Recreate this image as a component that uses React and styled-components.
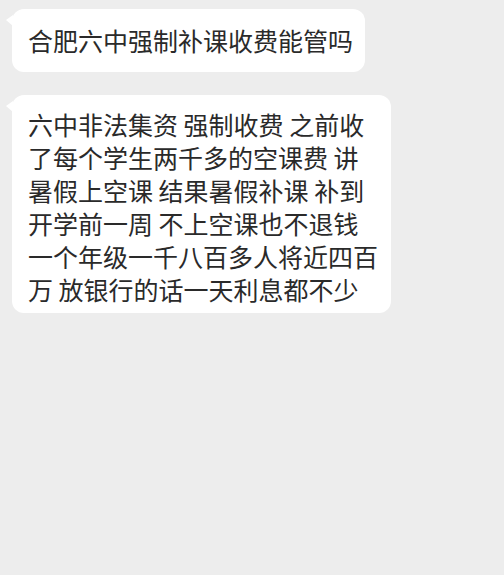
import React from 'react'
import styled, { createGlobalStyle } from 'styled-components'

const GlobalStyle = createGlobalStyle`
  html, body {
    margin: 0;
    padding: 0;
    background: #ededed;
  }
  body {
    font-family: "Noto Sans CJK SC", "Noto Sans", sans-serif;
  }
`

const messages = [
  {
    id: 1,
    lines: ['合肥六中强制补课收费能管吗'],
    pad: '15px 12px 15px 16px',
  },
  {
    id: 2,
    lines: [
      '六中非法集资 强制收费 之前收',
      '了每个学生两千多的空课费 讲',
      '暑假上空课 结果暑假补课 补到',
      '开学前一周 不上空课也不退钱',
      '一个年级一千八百多人将近四百',
      '万 放银行的话一天利息都不少',
    ],
    pad: '13px 13px 7px 16px',
  },
]

const App = () => {
  return (
    <>
      <GlobalStyle />
      <ChatView>
        {messages.map(m => (
          <Row key={m.id}>
            <Bubble $pad={m.pad}>
              {m.lines.map((l, i) => (
                <Line key={i}>{l}</Line>
              ))}
            </Bubble>
          </Row>
        ))}
      </ChatView>
    </>
  )
}

export default App

const ChatView = styled.div`
  display: flex;
  flex-direction: column;
  gap: 23px;
  min-height: 100vh;
  box-sizing: border-box;
  padding: 9px 12px 0 12px;
  background: #ededed;
`

const Row = styled.div`
  display: flex;
  justify-content: flex-start;
`

const Bubble = styled.div`
  position: relative;
  background: #ffffff;
  border-radius: 12px;
  padding: ${p => p.$pad};
  color: #2a2a2a;
  font-size: 25px;
  line-height: 33px;

  &::before {
    content: '';
    position: absolute;
    left: -6px;
    top: 6px;
    width: 0;
    height: 0;
    border-top: 5px solid transparent;
    border-bottom: 6px solid transparent;
    border-right: 7px solid #ffffff;
  }
`

const Line = styled.div`
  white-space: nowrap;
`
